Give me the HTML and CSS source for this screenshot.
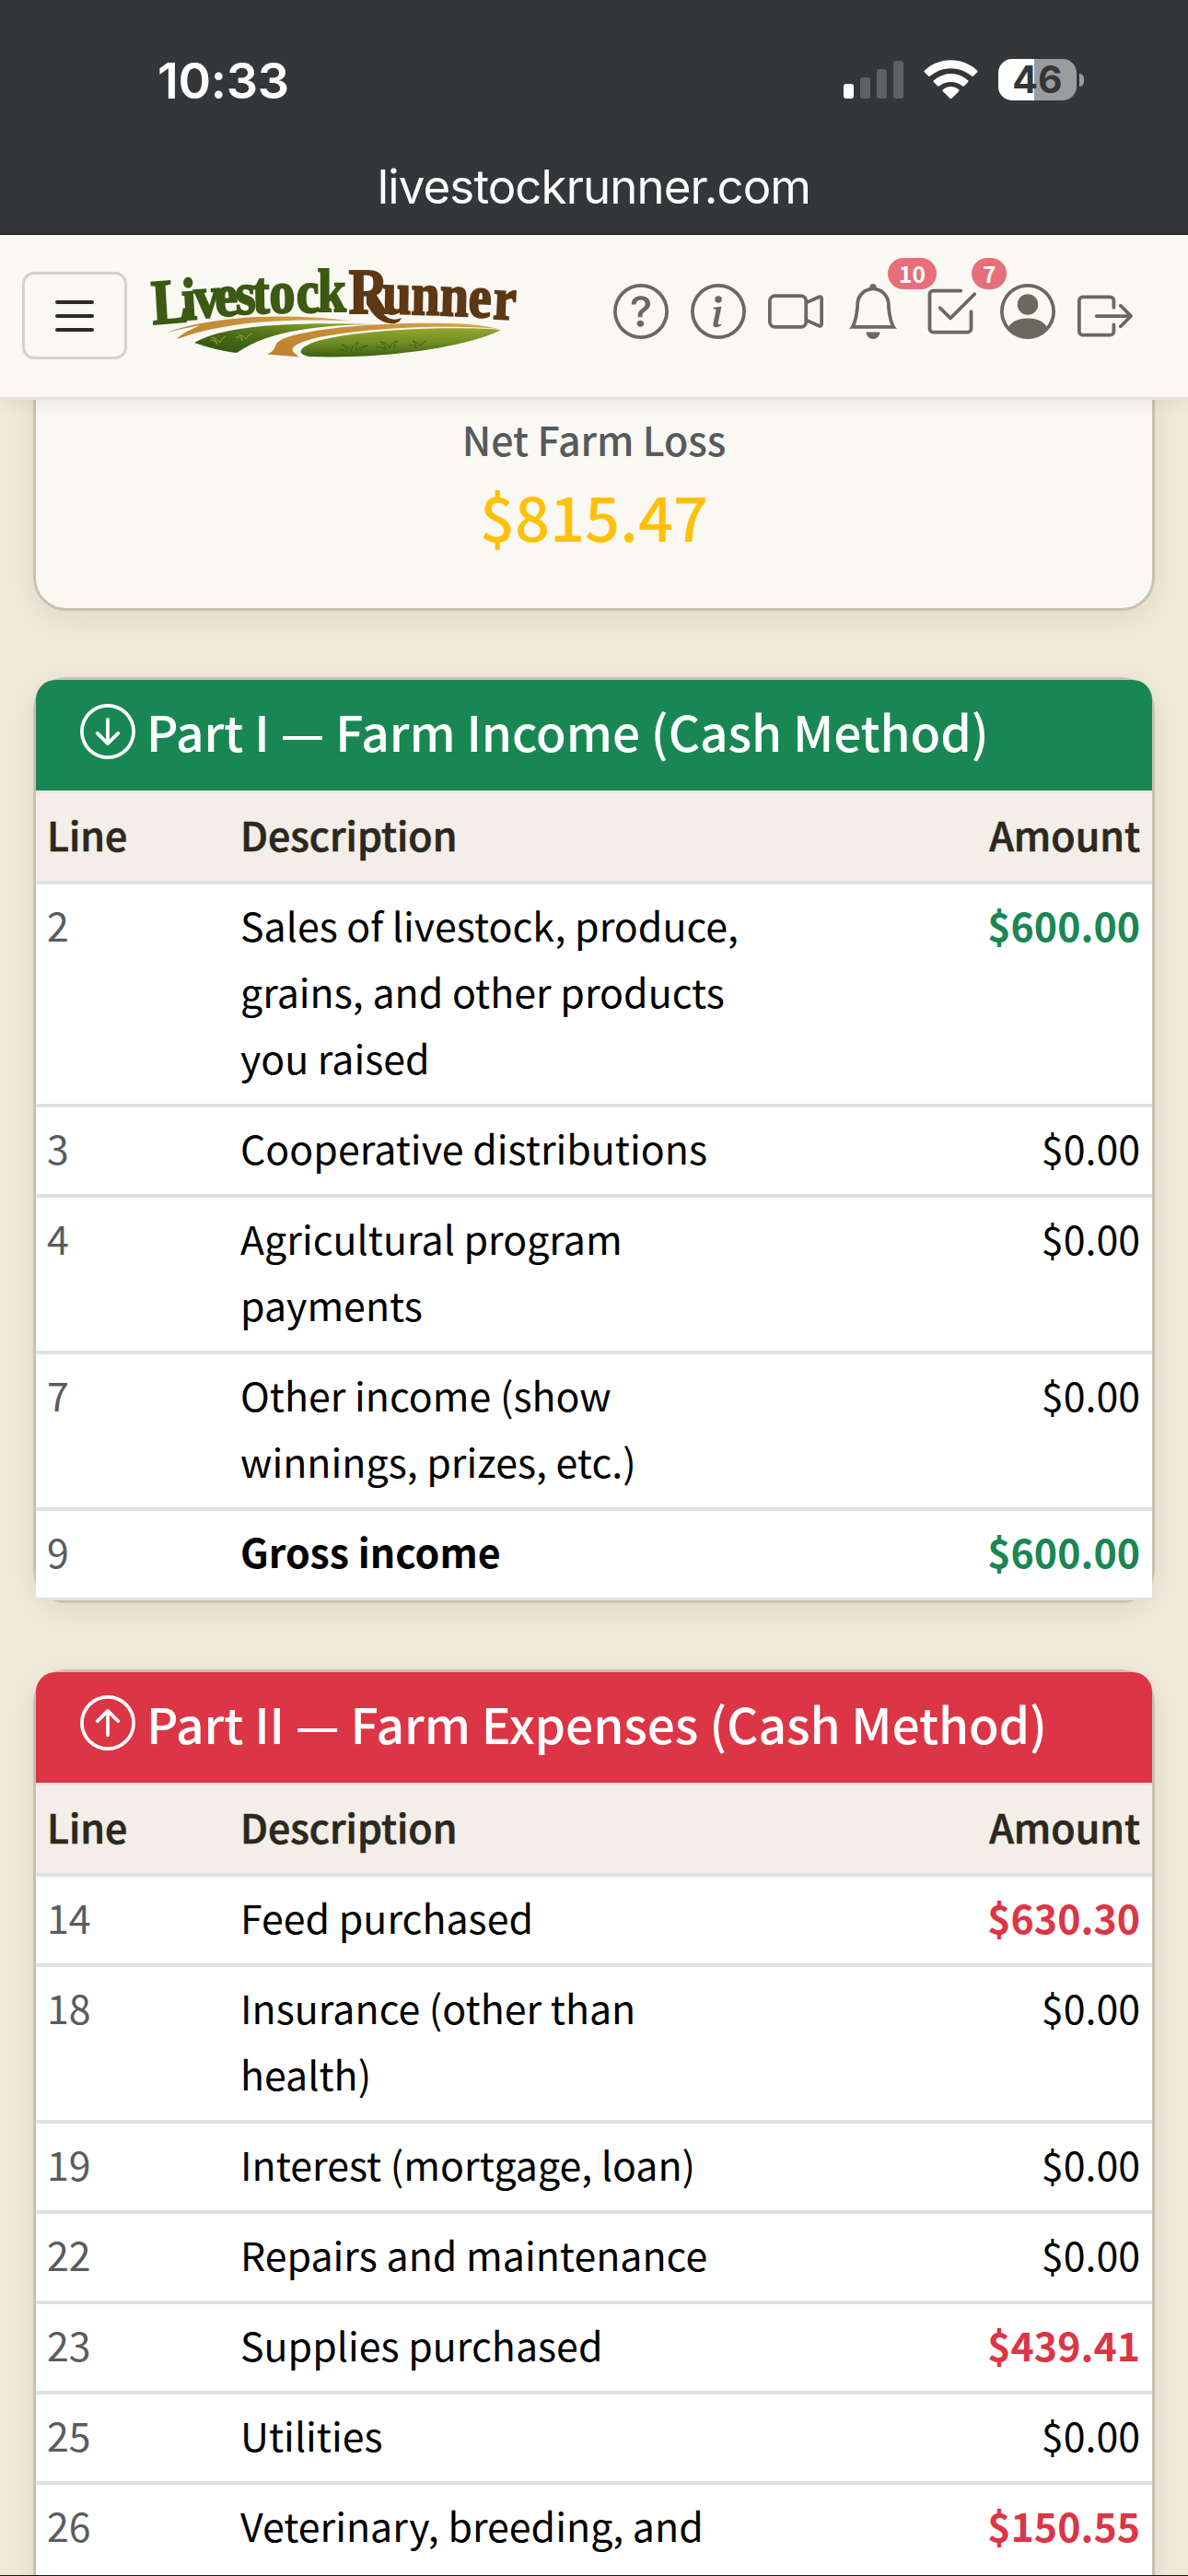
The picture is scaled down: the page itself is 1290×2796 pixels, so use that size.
FILE: index.html
```html
<!DOCTYPE html>
<html lang="en">
<head>
<meta charset="utf-8">
<title>Livestock Runner</title>
<link rel="stylesheet" href="styles.css">
</head>
<body>
<div class="screen">
  <div class="browser">
    <div class="status">
      <span class="clock">10:33</span>
      <div class="indicators">
        <svg class="signal" width="65" height="42" viewBox="0 0 65 42">
          <rect x="0" y="25" width="11" height="16" rx="3" fill="#fff"/>
          <g fill="#606163"><rect x="18" y="18" width="11" height="23" rx="3"/><rect x="36" y="9" width="11" height="32" rx="3"/><rect x="54" y="0" width="11" height="41" rx="3"/></g>
        </svg>
        <svg class="wifi" width="59" height="43" viewBox="0 0 59 43" fill="#fff">
          <path d="M1 11.5C17-3.500 42-3.500 58 11.500Q59 12.500 58 13.500L54 17.600Q53 18.500 52 17.600C39 6.500 20 6.500 7 17.600Q6 18.500 5 17.600L1 13.500Q0 12.500 1 11.500Z"/>
          <path d="M11 22.200C22 12.500 37 12.500 48 22.200Q49 23.200 48 24.200L44 28.200Q43 29.200 42 28.300C35 22.500 24 22.500 17 28.300Q16 29.200 15 28.200L11 24.200Q10 23.200 11 22.200Z"/>
          <path d="M21 32.200C26 28 33 28 38 32.200Q39 33.200 38 34.200L30.500 41.700Q29.500 42.600 28.500 41.700L21 34.200Q20 33.200 21 32.200Z"/>
        </svg>
        <div class="battery"><span>46</span></div>
        <i class="nub"></i>
      </div>
    </div>
    <div class="address">livestockrunner.com</div>
  </div>

  <header class="navbar">
    <button class="toggler" aria-label="Menu"><i></i><i></i><i></i></button>
    <svg class="logo" width="405" height="100" viewBox="160 288 405 100">
      <defs>
        <linearGradient id="field" x1="0" y1="0" x2="0" y2="1"><stop offset="0" stop-color="#93a62c"/><stop offset=".5" stop-color="#6f8d24"/><stop offset="1" stop-color="#3f5f12"/></linearGradient>
        <linearGradient id="dark" x1="0" y1="1" x2="1" y2="0"><stop offset="0" stop-color="#2f5010"/><stop offset=".5" stop-color="#4f7219"/><stop offset="1" stop-color="#9cae30"/></linearGradient>
        <linearGradient id="path" x1="0" y1="0" x2="1" y2="0"><stop offset="0" stop-color="#bd8430"/><stop offset="1" stop-color="#d9a548"/></linearGradient>
      </defs>
      <g transform="scale(.86 1)">
        <text class="wordmark" x="193 231 246 272 298 319 340.500 374.500 401 440.500 483 519 555 591 622" y="352 347.500 345 343 341 340 339.500 339 338.500 340.500 340 341 342 343.500 345.500" rotate="-4 -4 -3 -2 -2 -1 -1 -1 0 0 1 1 2 2 3"><tspan fill="#3c5a12" stroke="#3c5a12"><tspan class="cap">L</tspan>ivestock</tspan><tspan fill="#5d3815" stroke="#5d3815"><tspan class="cap">R</tspan>unner</tspan></text>
      </g>
      <path fill="#5d3815" d="M398 322L407 322C411 335 416 343 424 346Q430 348 436 345C434 350 429 352 424 351C412 350 405 342 398 330Z"/>
      <g fill="url(#path)">
        <path d="M181 361C230 343 310 339 382 348.500C320 346 250 347 192 368C197 362 208 357 218 353Q200 356 181 361Z"/>
        <path d="M290 384.500C305 378 292 373 312 366C360 351 470 348 520 353L543 357C470 351 380 358 338 368C312 376 315 380 325 387.500Z"/>
      </g>
      <path fill="url(#dark)" d="M211 372C240 355 300 349 409 352C350 353 295 357 257 383C240 381 225 377 211 372Z"/>
      <path fill="url(#field)" d="M336 387C321 384 325 377 342 371C380 359 480 353 544 358C510 376 420 390 336 387Z"/>
      <g fill="none" stroke="#3f6212" stroke-width="1">
        <path d="M368 380q6-1 9 3q-1-7-6-9q8 1 10 8q1-8 8-11q-4 6-2 10q5-6 13-6q-7 2-9 6M408 377q8-1 11 3q-1-7-6-9q8 1 10 7q2-7 9-8q-5 4-4 8M444 374q6 0 8 4q0-6-4-8q6 1 8 6q2-5 7-6"/>
        <path stroke="#8da52c" d="M228 369q6 0 8 5q-1-6-6-8q6 1 9 6q1-5 6-7M256 366q6-1 7 4q0-6-4-7q6 1 8 5q2-5 7-6"/>
      </g>
    </svg>
    <nav class="actions">
      <svg class="icon" viewBox="0 0 16 16"><path d="M8 15A7 7 0 1 1 8 1a7 7 0 0 1 0 14m0 1A8 8 0 1 0 8 0a8 8 0 0 0 0 16"/><path d="M5.255 5.786a.237.237 0 0 0 .241.247h.825c.138 0 .248-.113.266-.25.09-.656.54-1.134 1.342-1.134.686 0 1.314.343 1.314 1.168 0 .635-.374.927-.965 1.371-.673.489-1.206 1.060-1.168 1.987l.003.217a.25.25 0 0 0 .25.246h.811a.25.25 0 0 0 .25-.25v-.105c0-.718.273-.927 1.010-1.486.609-.463 1.244-.977 1.244-2.056 0-1.511-1.276-2.241-2.673-2.241-1.267 0-2.655.59-2.750 2.286m1.557 5.763c0 .533.425.927 1.010.927.609 0 1.028-.394 1.028-.927 0-.552-.42-.94-1.029-.94-.584 0-1.009.388-1.009.94"/></svg>
      <svg class="icon" viewBox="0 0 16 16"><path d="M8 15A7 7 0 1 1 8 1a7 7 0 0 1 0 14m0 1A8 8 0 1 0 8 0a8 8 0 0 0 0 16"/><path d="m8.930 6.588-2.290.287-.082.38.45.083c.294.07.352.176.288.469l-.738 3.468c-.194.897.105 1.319.808 1.319.545 0 1.178-.252 1.465-.598l.088-.416c-.2.176-.492.246-.686.246-.275 0-.375-.193-.304-.533zM9 4.500a1 1 0 1 1-2 0 1 1 0 0 1 2 0"/></svg>
      <svg class="icon" viewBox="0 0 16 16"><path fill-rule="evenodd" d="M0 5a2 2 0 0 1 2-2h7.500a2 2 0 0 1 1.983 1.738l3.110-1.382A1 1 0 0 1 16 4.269v7.462a1 1 0 0 1-1.406.913l-3.111-1.382A2 2 0 0 1 9.500 13H2a2 2 0 0 1-2-2zm11.500 5.175 3.500 1.556V4.269l-3.500 1.556zM2 4a1 1 0 0 0-1 1v6a1 1 0 0 0 1 1h7.500a1 1 0 0 0 1-1V5a1 1 0 0 0-1-1z"/></svg>
      <span class="notify"><svg class="icon" viewBox="0 0 16 16"><path d="M8 16a2 2 0 0 0 2-2H6a2 2 0 0 0 2 2M8 1.918l-.797.161A4 4 0 0 0 4 6c0 .628-.134 2.197-.459 3.742-.16.767-.376 1.566-.663 2.258h10.244c-.287-.692-.502-1.490-.663-2.258C12.134 8.197 12 6.628 12 6a4 4 0 0 0-3.203-3.920zM14.220 12c.223.447.481.801.78 1H1c.299-.199.557-.553.78-1C2.680 10.200 3 6.880 3 6c0-2.420 1.720-4.440 4.005-4.901a1 1 0 1 1 1.990 0A5 5 0 0 1 13 6c0 .88.32 4.200 1.220 6"/></svg><b class="badge">10</b></span>
      <span class="notify"><svg class="icon" viewBox="0 0 16 16"><path d="M3 14.500A1.500 1.500 0 0 1 1.500 13V3A1.500 1.500 0 0 1 3 1.500h8a.5.5 0 0 1 0 1H3a.5.5 0 0 0-.5.5v10a.5.5 0 0 0 .5.5h10a.5.5 0 0 0 .5-.5V8a.5.5 0 0 1 1 0v5a1.500 1.500 0 0 1-1.500 1.500z"/><path d="m8.354 10.354 7-7a.5.5 0 0 0-.708-.708L8 9.293 5.354 6.646a.5.5 0 1 0-.708.708l3 3a.5.5 0 0 0 .708 0"/></svg><b class="badge">7</b></span>
      <svg class="icon" viewBox="0 0 16 16"><path d="M11 6a3 3 0 1 1-6 0 3 3 0 0 1 6 0"/><path fill-rule="evenodd" d="M0 8a8 8 0 1 1 16 0A8 8 0 0 1 0 8m8-7a7 7 0 0 0-5.468 11.370C3.242 11.226 4.805 10 8 10s4.757 1.225 5.468 2.370A7 7 0 0 0 8 1"/></svg>
      <svg class="icon exit" viewBox="0 0 16 16"><path d="M10 12.500a.5.5 0 0 1-.5.5h-8a.5.5 0 0 1-.5-.5v-9a.5.5 0 0 1 .5-.5h8a.5.5 0 0 1 .5.5v2a.5.5 0 0 0 1 0v-2A1.500 1.500 0 0 0 9.500 2h-8A1.500 1.500 0 0 0 0 3.500v9A1.500 1.500 0 0 0 1.500 14h8a1.500 1.500 0 0 0 1.500-1.500v-2a.5.5 0 0 0-1 0z"/><path d="M15.854 8.354a.5.5 0 0 0 0-.708l-3-3a.5.5 0 0 0-.708.708L14.293 7.500H5.500a.5.5 0 0 0 0 1h8.793l-2.147 2.146a.5.5 0 0 0 .708.708z"/></svg>
    </nav>
  </header>

  <main class="content">
    <section class="card summary">
      <div class="label">Net Farm Loss</div>
      <div class="total">$815.47</div>
    </section>

    <section class="card">
      <h2 class="card-header income"><svg class="icon" viewBox="0 0 16 16"><path fill-rule="evenodd" d="M1 8a7 7 0 1 0 14 0A7 7 0 0 0 1 8m15 0A8 8 0 1 1 0 8a8 8 0 0 1 16 0M8.500 4.500a.5.5 0 0 0-1 0v5.793L5.354 8.146a.5.5 0 1 0-.708.708l3 3a.5.5 0 0 0 .708 0l3-3a.5.5 0 0 0-.708-.708L8.500 10.293z"/></svg>Part I — Farm Income (Cash Method)</h2>
      <table>
        <thead><tr><th class="line">Line</th><th class="desc">Description</th><th class="amount">Amount</th></tr></thead>
        <tbody>
          <tr><td class="line">2</td><td>Sales of livestock, produce, grains, and other products you raised</td><td class="amount gain">$600.00</td></tr>
          <tr><td class="line">3</td><td>Cooperative distributions</td><td class="amount">$0.00</td></tr>
          <tr><td class="line">4</td><td>Agricultural program payments</td><td class="amount">$0.00</td></tr>
          <tr><td class="line">7</td><td>Other income (show winnings, prizes, etc.)</td><td class="amount">$0.00</td></tr>
          <tr><td class="line">9</td><td><b>Gross income</b></td><td class="amount gain">$600.00</td></tr>
        </tbody>
      </table>
    </section>

    <section class="card">
      <h2 class="card-header expense"><svg class="icon up" viewBox="0 0 16 16"><path fill-rule="evenodd" d="M1 8a7 7 0 1 0 14 0A7 7 0 0 0 1 8m15 0A8 8 0 1 1 0 8a8 8 0 0 1 16 0M8.500 4.500a.5.5 0 0 0-1 0v5.793L5.354 8.146a.5.5 0 1 0-.708.708l3 3a.5.5 0 0 0 .708 0l3-3a.5.5 0 0 0-.708-.708L8.500 10.293z"/></svg>Part II — Farm Expenses (Cash Method)</h2>
      <table>
        <thead><tr><th class="line">Line</th><th class="desc">Description</th><th class="amount">Amount</th></tr></thead>
        <tbody>
          <tr><td class="line">14</td><td>Feed purchased</td><td class="amount loss">$630.30</td></tr>
          <tr><td class="line">18</td><td>Insurance (other than health)</td><td class="amount">$0.00</td></tr>
          <tr><td class="line">19</td><td>Interest (mortgage, loan)</td><td class="amount">$0.00</td></tr>
          <tr><td class="line">22</td><td>Repairs and maintenance</td><td class="amount">$0.00</td></tr>
          <tr><td class="line">23</td><td>Supplies purchased</td><td class="amount loss">$439.41</td></tr>
          <tr><td class="line">25</td><td>Utilities</td><td class="amount">$0.00</td></tr>
          <tr class="tall"><td class="line">26</td><td>Veterinary, breeding, and</td><td class="amount loss">$150.55</td></tr>
        </tbody>
      </table>
    </section>
  </main>
</div>
</body>
</html>
```
FILE: styles.css
```css
* { box-sizing: border-box; }
body {
  margin: 0;
  font-family: "Noto Sans CJK SC", "Noto Sans", sans-serif;
  font-size: 42.9px;
  line-height: 72px;
  color: #000;
}
.screen {
  display: flex;
  flex-direction: column;
  width: 1290px;
  height: 2796px;
  overflow: hidden;
  background: #f1eada;
  border-bottom: 1px solid #16181a;
}

/* Browser chrome */
.browser {
  flex: none;
  height: 255px;
  background: #343739;
  border-bottom: 1px solid #16181a;
  color: #fff;
  font-family: Inter, "Liberation Sans", sans-serif;
}
.status {
  display: flex;
  justify-content: space-between;
  height: 150px;
  padding: 53px 113px 0 171px;
}
.clock { font-size: 54px; font-weight: 600; letter-spacing: -.3px; line-height: 70px; }
.indicators { display: flex; align-items: flex-start; padding-top: 11px; }
.signal { margin: 2px 22px 0 0; }
.wifi { margin: 1px 22px 0 0; }
.battery {
  width: 85px;
  height: 45px;
  border-radius: 15px;
  background: linear-gradient(90deg, #fff 39px, #9b9c9e 39px);
  color: #343739;
  font-size: 41px;
  font-weight: 700;
  line-height: 45px;
  text-align: center;
}
.nub { width: 5px; height: 14px; margin: 16px 0 0 3px; border-radius: 0 5px 5px 0; background: #9b9c9e; }
.address { margin-top: 18px; font-size: 51px; line-height: 70px; letter-spacing: -.9px; text-align: center; }

/* Site navigation */
.navbar {
  position: relative;
  z-index: 1;
  flex: none;
  display: flex;
  align-items: flex-start;
  height: 179px;
  padding: 40px 60px 0 24px;
  background: #f9f8f3;
  border-bottom: 3px solid #e4e3dc;
  box-shadow: 0 4px 16px rgba(60, 45, 20, .08);
}
.toggler {
  display: flex;
  flex-direction: column;
  align-items: center;
  justify-content: center;
  gap: 11px;
  width: 114px;
  height: 95px;
  padding: 0;
  border: 3px solid #d4d2cb;
  border-radius: 13px;
  background: none;
}
.toggler i { width: 42px; height: 4px; border-radius: 2px; background: #2c2a24; }
.logo { margin: -7px 0 0 22px; overflow: visible; }
.wordmark { font: bold 65px "Liberation Serif", serif; stroke-width: 2.2px; }
.wordmark .cap { font-size: 69px; }
.actions { display: flex; gap: 24px; margin-left: auto; padding-top: 13px; }
.icon { display: block; flex: none; width: 60px; height: 60px; fill: #6b6860; }
.exit { margin-top: 5px; }
.notify { position: relative; }
.badge {
  position: absolute;
  left: 46px;
  top: -28px;
  min-width: 38px;
  height: 34px;
  padding: 0 12px;
  border-radius: 17px;
  background: #e66f79;
  color: #fff;
  font-size: 24.5px;
  line-height: 33px;
}
.notify:nth-of-type(2) .badge { left: 53px; }

/* Cards */
.content { flex: 1; min-height: 0; padding: 0 36px; overflow: hidden; margin-top: -33px; }
.card {
  margin-bottom: 72px;
  border: 3px solid #c9c1b3;
  border-radius: 36px;
  background: #f9f8f3;
  box-shadow: 0 8px 32px rgba(80, 60, 20, .1);
}
.summary { height: 262px; padding-top: 36px; text-align: center; }
.label { color: #565a5d; font-weight: 500; letter-spacing: -.1px; }
.total { margin-top: 2px; color: #ffc107; font-size: 66.7px; font-weight: 500; line-height: 90px; }
.card-header {
  display: flex;
  align-items: center;
  gap: 12px;
  height: 123px;
  margin: 0;
  padding: 0 48px 10px;
  border-bottom: 3px solid #ece7e0;
  border-radius: 21px 21px 0 0;
  color: #fff;
  font-size: 53.3px;
  font-weight: 500;
  letter-spacing: -.1px;
}
.card-header .icon { margin-top: 2px; fill: #fff; }
.card-header .up { margin-top: 0; transform: rotate(180deg); }
.income { background: #198754; }
.expense { background: #dc3545; }
table { width: 100%; table-layout: fixed; border-collapse: separate; border-spacing: 0; }
th, td { padding: 7px 12px 15px; border-bottom: 4px solid #dee2e6; vertical-align: top; text-align: left; }
th { padding-top: 8px; background: #f3eee7; color: #2c2820; font-weight: 500; -webkit-text-stroke: .7px #2c2820; }
td { background: #fff; }
tbody tr:last-child td { border-bottom-width: 3px; }
th.line { width: 210px; }
th.desc { width: 589px; }
td.line { color: #595c5f; }
.amount { padding-right: 13px; text-align: right; }
.gain { color: #198754; font-weight: 700; }
.loss { color: #dc3545; font-weight: 700; }
.tall td { height: 170px; }
```
